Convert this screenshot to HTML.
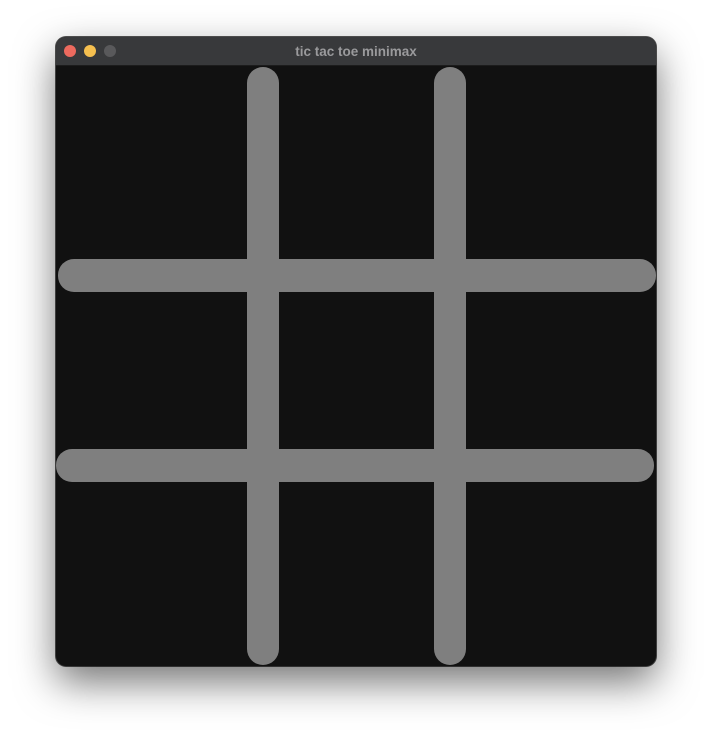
<!DOCTYPE html>
<html><head><meta charset="utf-8"><style>
html,body{margin:0;padding:0;width:712px;height:740px;background:#fff;overflow:hidden}
.win{position:absolute;left:56px;top:37px;width:600px;height:629px;border-radius:10px;background:#111;box-shadow:0 16px 40px rgba(0,0,0,0.55),0 0 0 1px #555;overflow:hidden}
.tb{position:absolute;left:0;top:0;width:600px;height:29px;background:#38393b;border-bottom:1px solid #1c1c1c;box-sizing:border-box}
.dot{position:absolute;top:8px;width:12px;height:12px;border-radius:50%}
.t{position:absolute;left:0;right:0;top:7px;text-align:center;font:bold 13.5px "Liberation Sans",sans-serif;color:#9a9a9c}
.l{position:absolute;background:#7f7f7f;border-radius:16px}
</style></head><body>
<div class="win">
<div class="tb">
<div class="dot" style="left:8px;background:#ed6a5e"></div>
<div class="dot" style="left:28px;background:#f5bf4f"></div>
<div class="dot" style="left:48px;background:#59595b"></div>
<div class="t">tic tac toe minimax</div>
</div>
<div class="l" style="left:191px;top:30px;width:32px;height:598px"></div>
<div class="l" style="left:378px;top:30px;width:32px;height:598px"></div>
<div class="l" style="left:2px;top:222px;width:598px;height:33px"></div>
<div class="l" style="left:0px;top:412px;width:598px;height:33px"></div>
</div>
</body></html>
